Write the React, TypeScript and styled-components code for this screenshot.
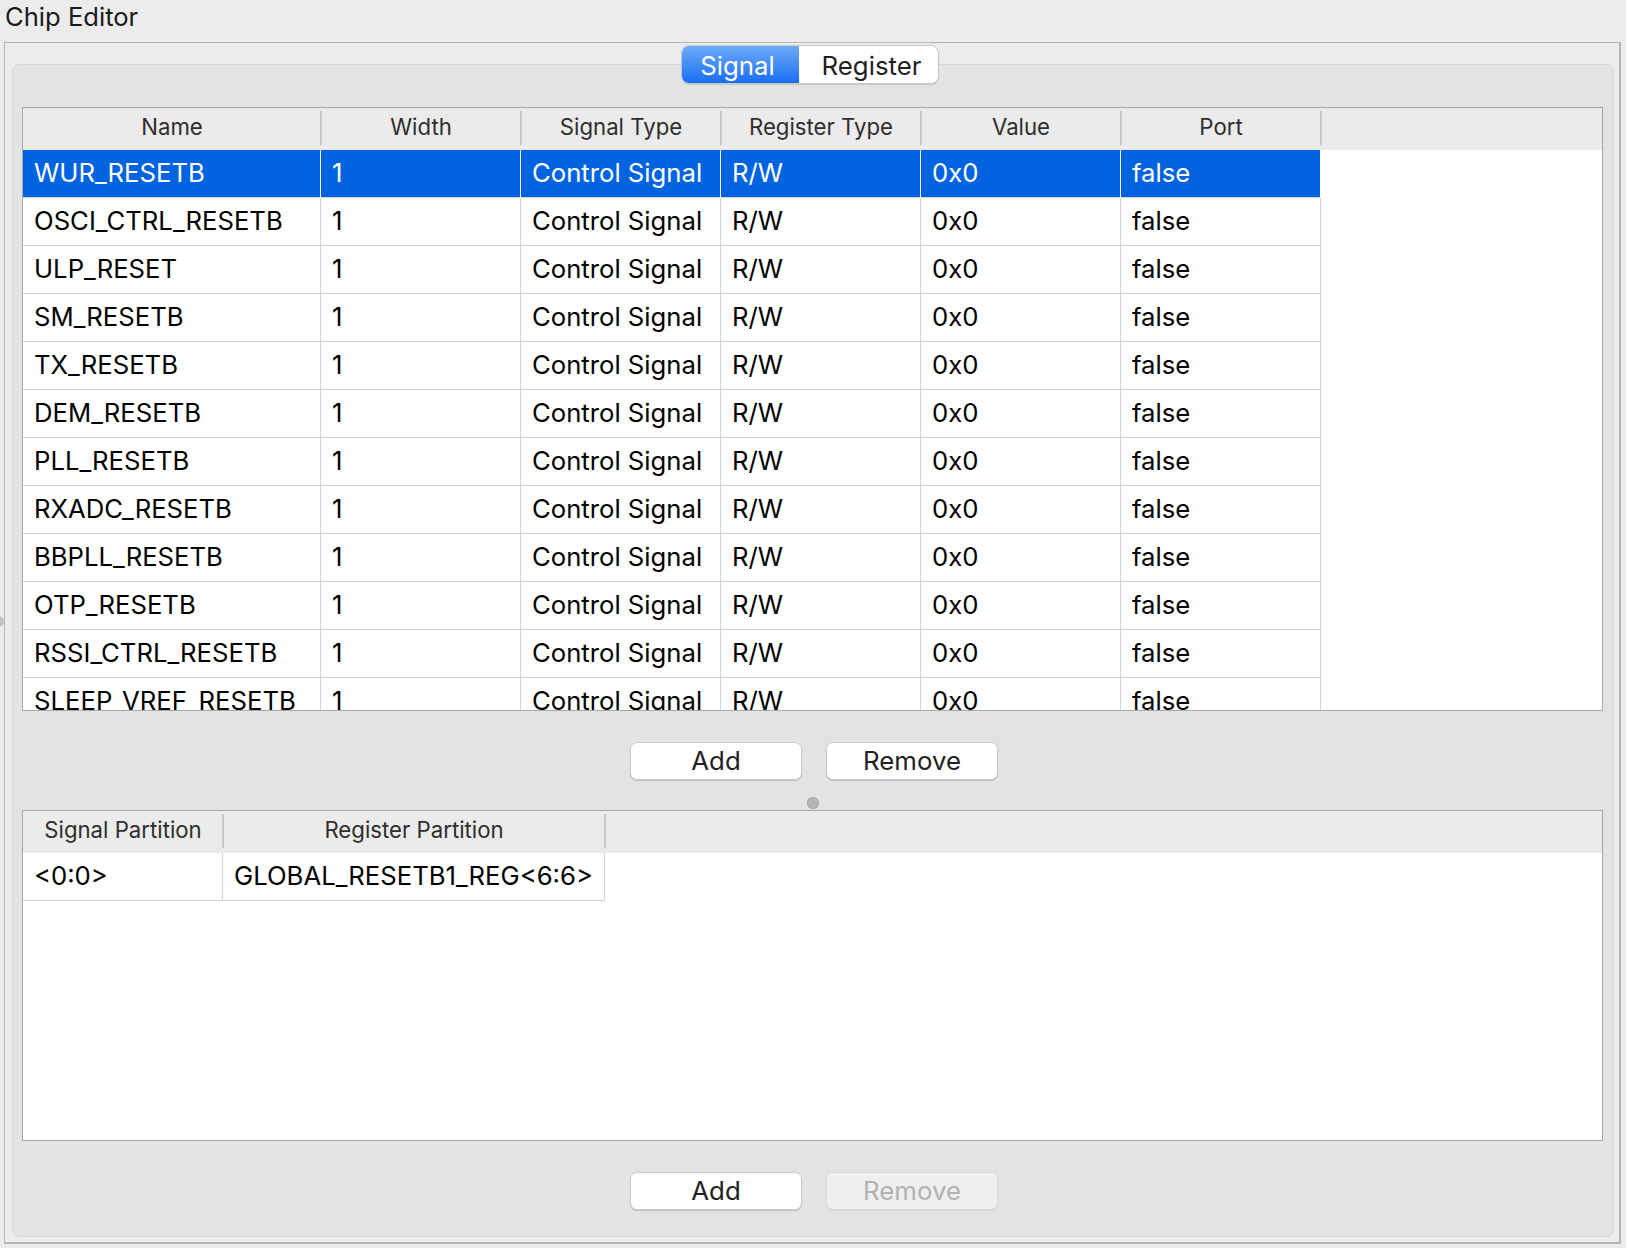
import React from 'react';
import styled, { createGlobalStyle, css } from 'styled-components';

const FONT = `Inter, "Noto Sans", "Liberation Sans", sans-serif`;

const GlobalStyle = createGlobalStyle`
  html, body { margin: 0; padding: 0; background: #ececec; }
  body { font-family: ${FONT}; -webkit-font-smoothing: antialiased; }
  * { box-sizing: border-box; }
`;

const Window = styled.div`
  position: relative;
  width: 1626px;
  height: 1248px;
  background: #ececec;
  display: flex;
  flex-direction: column;
  overflow: hidden;
`;

const EdgeHandle = styled.div`
  position: absolute;
  left: -7px;
  top: 616px;
  width: 11px;
  height: 11px;
  border-radius: 50%;
  background: #c2c2c2;
`;

const Title = styled.div`
  height: 42px;
  flex: none;
  padding: 1px 0 0 5px;
  font-size: 25.6px;
  line-height: 32px;
  color: #1a1a1a;
`;

const GroupBox = styled.div`
  margin-left: 4px;
  width: 1617px;
  height: 1202px;
  flex: none;
  border: solid #b4b4b4;
  border-width: 1px 2px 2px 1px;
  padding: 2px 5px 5px 7px;
  display: flex;
  flex-direction: column;
`;

const TabBar = styled.div`
  position: relative;
  z-index: 1;
  display: flex;
  justify-content: center;
  height: 39px;
  flex: none;
  padding-right: 7px;
`;

const Segmented = styled.div`
  display: flex;
  height: 39px;
  border-radius: 8px;
  border: 1px solid #c6c6c6;
  background: #fff;
  overflow: hidden;
  box-shadow: 0 1px 1px rgba(0, 0, 0, 0.12);
`;

const Segment = styled.div<{ $active?: boolean; $w: number; $shift: number }>`
  width: ${(p) => p.$w}px;
  display: flex;
  align-items: center;
  justify-content: center;
  padding-top: 2px;
  padding-left: ${(p) => Math.max(0, p.$shift)}px;
  padding-right: ${(p) => Math.max(0, -p.$shift)}px;
  font-size: 25.8px;
  color: #1f1f1f;
  ${(p) =>
    p.$active &&
    css`
      background: linear-gradient(#6eabf9, #1a6ef3);
      color: #fff;
    `}
`;

const Pane = styled.div`
  flex: 1;
  margin-top: -20px;
  background: #e3e3e3;
  border: 1px solid #d6d6d6;
  border-radius: 8px;
  padding: 42px 10px 26px 9px;
  display: flex;
  flex-direction: column;
`;

const Table = styled.div<{ $h: number }>`
  height: ${(p) => p.$h}px;
  flex: none;
  border: 1px solid #a8a8a8;
  background: #fff;
  display: flex;
  flex-direction: column;
  overflow: hidden;
`;

const HeaderRow = styled.div`
  height: 42px;
  flex: none;
  background: #ebebeb;
  display: flex;
`;

const HeaderCell = styled.div<{ $w: number }>`
  position: relative;
  width: ${(p) => p.$w}px;
  flex: none;
  display: flex;
  align-items: center;
  justify-content: center;
  padding-bottom: 5px;
  font-size: 22.2px;
  color: #2e2e2e;
  &::after {
    content: '';
    position: absolute;
    right: -1px;
    top: 3px;
    bottom: 5px;
    width: 2px;
    background: #c8c8c8;
  }
`;

const Body = styled.div`
  flex: 1;
  overflow: hidden;
`;

const Row = styled.div`
  display: flex;
  height: 48px;
`;

const Cell = styled.div<{ $w: number; $sel?: boolean }>`
  width: ${(p) => p.$w}px;
  flex: none;
  height: 48px;
  padding-left: 11px;
  border-right: 1px solid ${(p) => (p.$sel ? '#ffffff' : '#d4d4d4')};
  border-bottom: 1px solid #d4d4d4;
  background: ${(p) => (p.$sel ? '#0064e1' : '#ffffff')};
  color: ${(p) => (p.$sel ? '#ffffff' : '#000000')};
  font-size: 25.7px;
  line-height: 45px;
  white-space: nowrap;
  overflow: hidden;
`;

const ButtonRow = styled.div`
  display: flex;
  justify-content: center;
  gap: 24px;
  margin-top: 31px;
  height: 38px;
  flex: none;
  padding-left: 3px;
`;

const Button = styled.button`
  width: 172px;
  height: 38px;
  padding: 0 0 2px;
  border-radius: 7px;
  border: 1px solid #c9c9c9;
  background: #ffffff;
  font-family: ${FONT};
  font-size: 25.8px;
  color: #222;
  box-shadow: 0 1px 1px rgba(0, 0, 0, 0.16);
  &:disabled {
    background: #efefef;
    color: #b2b2b2;
    border-color: #d9d9d9;
    box-shadow: 0 1px 1px rgba(0, 0, 0, 0.06);
  }
`;

const Splitter = styled.div`
  height: 30px;
  flex: none;
  display: flex;
  justify-content: center;
  padding-top: 17px;
`;

const SplitterDot = styled.div`
  width: 12px;
  height: 12px;
  border-radius: 50%;
  background: #b6b6b6;
  box-shadow: inset 0 0 0 1px #a9a9a9;
`;

const signalCols = [
  { title: 'Name', w: 298 },
  { title: 'Width', w: 200 },
  { title: 'Signal Type', w: 200 },
  { title: 'Register Type', w: 200 },
  { title: 'Value', w: 200 },
  { title: 'Port', w: 200 },
];

const names = [
  'WUR_RESETB',
  'OSCI_CTRL_RESETB',
  'ULP_RESET',
  'SM_RESETB',
  'TX_RESETB',
  'DEM_RESETB',
  'PLL_RESETB',
  'RXADC_RESETB',
  'BBPLL_RESETB',
  'OTP_RESETB',
  'RSSI_CTRL_RESETB',
  'SLEEP_VREF_RESETB',
];

const partCols = [
  { title: 'Signal Partition', w: 200 },
  { title: 'Register Partition', w: 382 },
];

export default function App() {
  return (
    <>
      <GlobalStyle />
      <Window>
        <EdgeHandle />
        <Title>Chip Editor</Title>
        <GroupBox>
          <TabBar>
            <Segmented>
              <Segment $active $w={117} $shift={-5}>
                Signal
              </Segment>
              <Segment $w={139} $shift={7}>
                Register
              </Segment>
            </Segmented>
          </TabBar>
          <Pane>
            <Table $h={604}>
              <HeaderRow>
                {signalCols.map((c) => (
                  <HeaderCell key={c.title} $w={c.w}>
                    {c.title}
                  </HeaderCell>
                ))}
              </HeaderRow>
              <Body>
                {names.map((n, i) => {
                  const sel = i === 0;
                  const vals = [n, '1', 'Control Signal', 'R/W', '0x0', 'false'];
                  return (
                    <Row key={n}>
                      {vals.map((v, j) => (
                        <Cell key={j} $w={signalCols[j].w} $sel={sel}>
                          {v}
                        </Cell>
                      ))}
                    </Row>
                  );
                })}
              </Body>
            </Table>
            <ButtonRow>
              <Button>Add</Button>
              <Button>Remove</Button>
            </ButtonRow>
            <Splitter>
              <SplitterDot />
            </Splitter>
            <Table $h={331}>
              <HeaderRow>
                {partCols.map((c) => (
                  <HeaderCell key={c.title} $w={c.w}>
                    {c.title}
                  </HeaderCell>
                ))}
              </HeaderRow>
              <Body>
                <Row>
                  <Cell $w={200}>&lt;0:0&gt;</Cell>
                  <Cell $w={382}>GLOBAL_RESETB1_REG&lt;6:6&gt;</Cell>
                </Row>
              </Body>
            </Table>
            <ButtonRow>
              <Button>Add</Button>
              <Button disabled>Remove</Button>
            </ButtonRow>
          </Pane>
        </GroupBox>
      </Window>
    </>
  );
}
